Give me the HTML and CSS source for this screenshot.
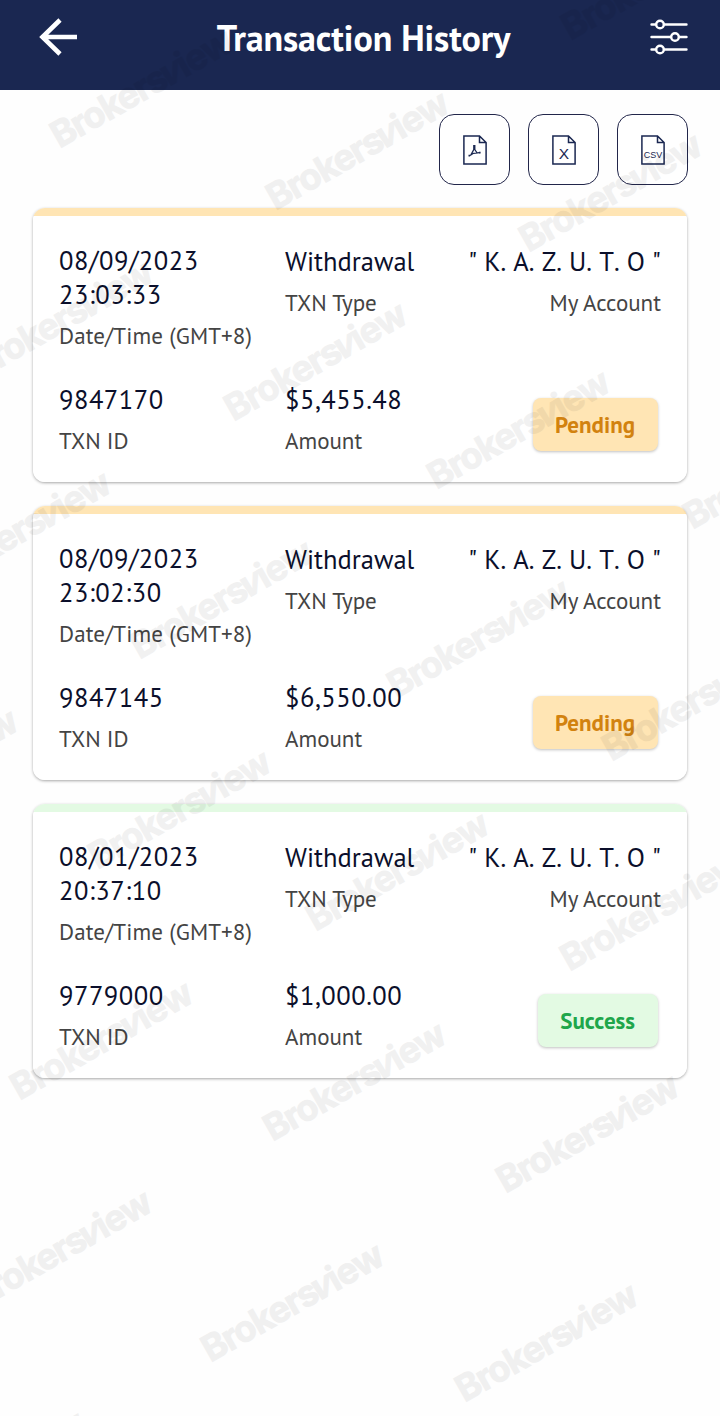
FILE: index.html
```
<!DOCTYPE html>
<html lang="en">
<head>
    <meta charset="UTF-8">
    <meta name="viewport" content="width=device-width, initial-scale=1.0">
    <title>Transaction History</title>
    <link rel="stylesheet" href="styles.css">
</head>
<body>
<div class="header">
    <a class="back" href="#">
        <svg width="38" height="38" viewBox="0 0 38 38" fill="none" stroke="#fff" stroke-width="4.6">
            <path d="M21 2L3.5 19L21 36M3 19H38"/>
        </svg>
    </a>
    <h1 class="title">Transaction History</h1>
    <a class="filter" href="#">
        <svg width="38" height="36" viewBox="0 0 38 36" fill="none" stroke="#fff" stroke-width="2.4" stroke-linecap="round">
            <path d="M1.5 5.5H6M14 5.5H36.5M1.5 18H21M29 18H36.5M1.5 30.5H6M14 30.5H36.5"/>
            <circle cx="10" cy="5.5" r="3.8"/>
            <circle cx="25" cy="18" r="3.8"/>
            <circle cx="10" cy="30.5" r="3.8"/>
        </svg>
    </a>
</div>

<div class="exports">
    <button class="exportButton">
        <svg width="24" height="30" viewBox="0 0 24 30" fill="none" stroke="#1a2751" stroke-width="1.5">
            <path d="M.9 .9H16.5L23.1 7.5V29.1H.9ZM16.5 .9V7.5H23.1"/>
            <path stroke-width="1.3" d="M10.8 10V14.5L7.5 20.5M11.8 10V14.5L14.2 18M7 20.5L10.5 18.3L16.5 17.6"/>
            <path stroke-width="1.6" d="M6.3 19.8V21.4M16.8 16.8V18.6"/>
        </svg>
    </button>
    <button class="exportButton">
        <svg width="24" height="30" viewBox="0 0 24 30" fill="none" stroke="#1a2751" stroke-width="1.5">
            <path d="M.9 .9H16.5L23.1 7.5V29.1H.9ZM16.5 .9V7.5H23.1"/>
            <text class="iconText" x="12" y="23.5" font-size="15.5">X</text>
        </svg>
    </button>
    <button class="exportButton">
        <svg width="24" height="30" viewBox="0 0 24 30" fill="none" stroke="#1a2751" stroke-width="1.5">
            <path d="M.9 .9H16.5L23.1 7.5V29.1H.9ZM16.5 .9V7.5H23.1"/>
            <text class="iconText" x="12" y="23" font-size="9">CSV</text>
        </svg>
    </button>
</div>

<div class="cards">
    <div class="card pending">
        <div class="cell">
            <div class="value date">08/09/2023 23:03:33</div>
            <div class="label wide">Date/Time (GMT+8)</div>
        </div>
        <div class="cell low">
            <div class="value word">Withdrawal</div>
            <div class="label">TXN Type</div>
        </div>
        <div class="cell low right">
            <div class="value name">" K. A. Z. U. T. O "</div>
            <div class="label">My Account</div>
        </div>
        <div class="cell low">
            <div class="value">9847170</div>
            <div class="label">TXN ID</div>
        </div>
        <div class="cell low">
            <div class="value">$5,455.48</div>
            <div class="label">Amount</div>
        </div>
        <div class="cell right">
            <span class="status">Pending</span>
        </div>
    </div>

    <div class="card pending">
        <div class="cell">
            <div class="value date">08/09/2023 23:02:30</div>
            <div class="label wide">Date/Time (GMT+8)</div>
        </div>
        <div class="cell low">
            <div class="value word">Withdrawal</div>
            <div class="label">TXN Type</div>
        </div>
        <div class="cell low right">
            <div class="value name">" K. A. Z. U. T. O "</div>
            <div class="label">My Account</div>
        </div>
        <div class="cell low">
            <div class="value">9847145</div>
            <div class="label">TXN ID</div>
        </div>
        <div class="cell low">
            <div class="value">$6,550.00</div>
            <div class="label">Amount</div>
        </div>
        <div class="cell right">
            <span class="status">Pending</span>
        </div>
    </div>

    <div class="card success">
        <div class="cell">
            <div class="value date">08/01/2023 20:37:10</div>
            <div class="label wide">Date/Time (GMT+8)</div>
        </div>
        <div class="cell low">
            <div class="value word">Withdrawal</div>
            <div class="label">TXN Type</div>
        </div>
        <div class="cell low right">
            <div class="value name">" K. A. Z. U. T. O "</div>
            <div class="label">My Account</div>
        </div>
        <div class="cell low">
            <div class="value">9779000</div>
            <div class="label">TXN ID</div>
        </div>
        <div class="cell low">
            <div class="value">$1,000.00</div>
            <div class="label">Amount</div>
        </div>
        <div class="cell right">
            <span class="status">Success</span>
        </div>
    </div>
</div>

<!-- watermark layer over the whole page -->
<svg class="watermark" width="720" height="1416" viewBox="0 0 720 1416" aria-hidden="true">
    <defs>
        <g id="mark" transform="rotate(-29.6)">
            <text x="0" y="1" textLength="128">Brokers</text>
            <text x="121" y="1" transform="skewX(-16)">v</text>
            <text x="144" y="1" textLength="59">iew</text>
        </g>
    </defs>
    <use href="#mark" x="570" y="40"/>
    <use href="#mark" x="59" y="148"/>
    <use href="#mark" x="275" y="210"/>
    <use href="#mark" x="528" y="252"/>
    <use href="#mark" x="732" y="323"/>
    <use href="#mark" x="-21" y="379"/>
    <use href="#mark" x="233" y="421"/>
    <use href="#mark" x="436" y="489"/>
    <use href="#mark" x="692" y="529"/>
    <use href="#mark" x="-63" y="590"/>
    <use href="#mark" x="139" y="659"/>
    <use href="#mark" x="396" y="698"/>
    <use href="#mark" x="611" y="761"/>
    <use href="#mark" x="-156" y="828"/>
    <use href="#mark" x="97" y="869"/>
    <use href="#mark" x="315" y="931"/>
    <use href="#mark" x="569" y="971"/>
    <use href="#mark" x="19" y="1100"/>
    <use href="#mark" x="272" y="1141"/>
    <use href="#mark" x="505" y="1193"/>
    <use href="#mark" x="-22" y="1309"/>
    <use href="#mark" x="210" y="1362"/>
    <use href="#mark" x="464" y="1402"/>
    <use href="#mark" x="-89" y="1530"/>
</svg>
</body>
</html>
```
FILE: styles.css
```
* {
    box-sizing: border-box;
}
body {
    position: relative;
    min-height: 1416px;
    margin: 0;
    background-color: #FEFEFE;
    font-family: "PT Sans", "Noto Sans", sans-serif;
    color: #0B0F2B;
}
.header {
    display: flex;
    justify-content: space-between;
    align-items: center;
    height: 90px;
    padding: 0 32px 16px 39px;
    background-color: #1A2751;
}
.back, .filter {
    display: flex;
}
.title {
    margin: 1px 0 0;
    font-size: 36px;
    line-height: 44px;
    font-weight: bold;
    letter-spacing: -0.1px;
    color: #FFF;
}
.exports {
    display: flex;
    justify-content: flex-end;
    gap: 18px;
    padding: 24px 32px 23px;
}
.exportButton {
    display: flex;
    justify-content: center;
    align-items: center;
    width: 71px;
    height: 71px;
    padding: 0;
    border: 1px solid #22264A;
    border-radius: 15px;
    background-color: #FFF;
}
.iconText {
    font-family: "Liberation Sans", sans-serif;
    fill: #1A2751;
    stroke: none;
    text-anchor: middle;
}

.cards {
    display: flex;
    flex-direction: column;
    gap: 24px;
    padding: 0 33px;
}
.card {
    display: grid;
    grid-template-columns: 226px 150px 1fr;
    grid-template-rows: 138px 1fr;
    height: 274px;
    padding: 35px 26px 0;
    border-radius: 12px;
    box-shadow: 0 1px 3px rgba(0, 0, 0, 0.35);
}
.pending {
    background: linear-gradient(#FFE5B4 8px, #FFF 8px);
}
.success {
    background: linear-gradient(#E3FAE3 8px, #FFF 8px);
}
.low {
    padding-top: 1px;
}
.right {
    text-align: right;
}
.value {
    font-size: 26.5px;
    line-height: 34px;
    letter-spacing: 0.5px;
    white-space: nowrap;
}
.date {
    width: 150px;
    letter-spacing: 0.55px;
    white-space: normal;
}
.word {
    letter-spacing: 0;
}
.name {
    margin-left: -20px;
    font-kerning: none;
    letter-spacing: 0.05px;
}
.label {
    margin-top: 9px;
    font-size: 23px;
    line-height: 32px;
    white-space: nowrap;
    color: #444;
}
.wide {
    margin-top: 9px;
    letter-spacing: 0.1px;
}
.status {
    display: inline-block;
    height: 53px;
    margin: 17px 3px 0 0;
    padding: 0 23px 0 22px;
    border-radius: 8px;
    box-shadow: 0 1px 3px rgba(0, 0, 0, 0.25);
    font-size: 23px;
    line-height: 54px;
    font-weight: bold;
}
.pending .status {
    background-color: #FFE5B4;
    color: #D2820F;
}
.success .status {
    background-color: #E3FAE3;
    color: #20A64B;
}

.watermark {
    position: absolute;
    top: 0;
    left: 0;
    pointer-events: none;
    font-family: Inter, sans-serif;
    font-size: 36px;
    font-weight: bold;
    fill: #000;
    stroke: #000;
    stroke-width: 1px;
    opacity: 0.05;
}
```
